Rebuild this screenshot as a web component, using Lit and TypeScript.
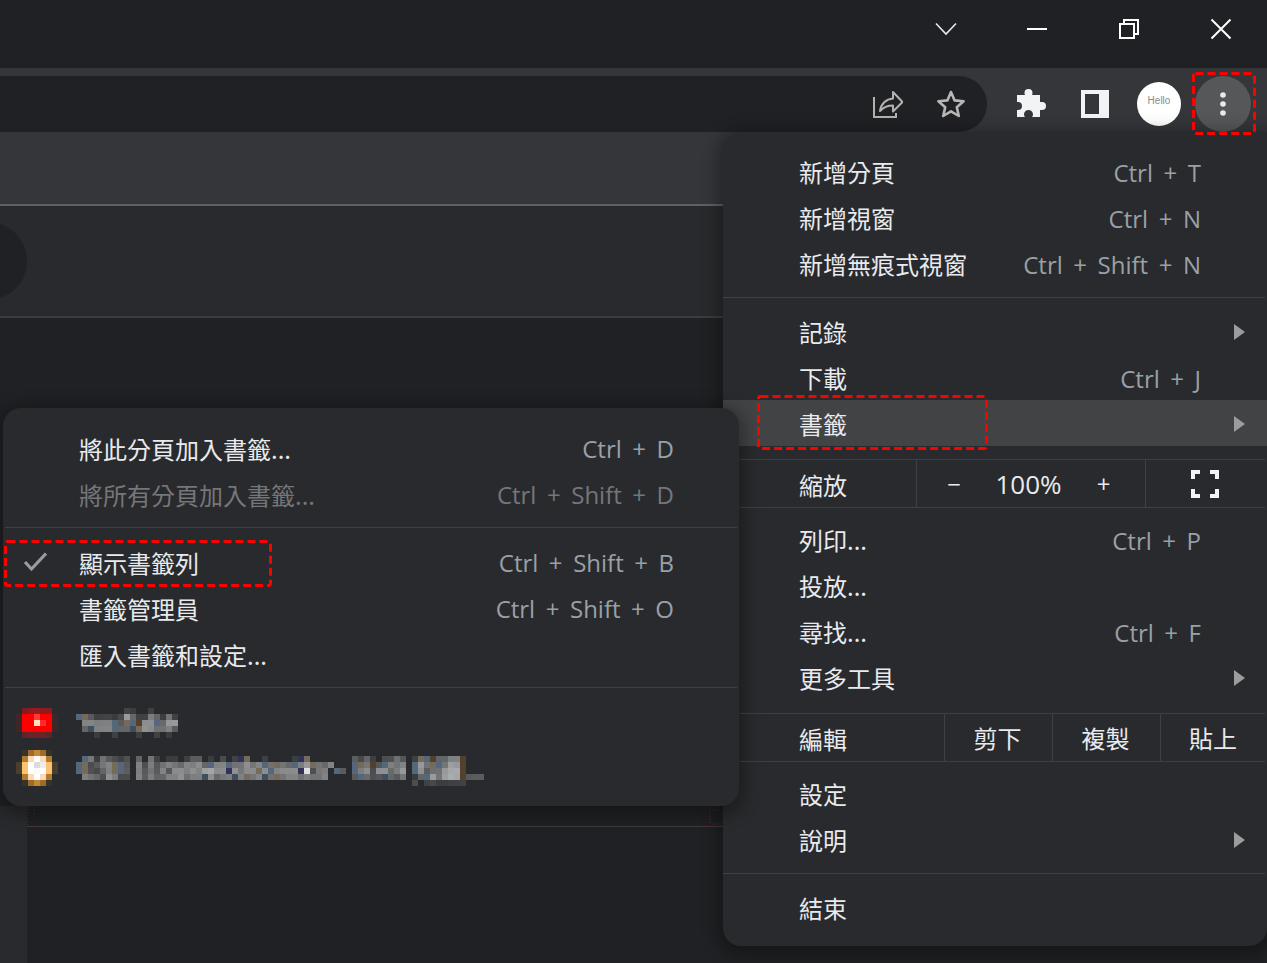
import { LitElement, html, css, svg } from "lit";
import { customElement } from "lit/decorators.js";

type Row = { t: string; k?: string; arrow?: boolean; hover?: boolean; dim?: boolean; check?: boolean };

const arrowIcon = html`<svg class="arrow" viewBox="0 0 11 16"><path d="M0 0 L11 8 L0 16 Z" fill="#9b9c9e"/></svg>`;

function hash(i: number) { return ((i * 2654435761) >>> 0) / 4294967296; }

const tints: Record<string, string> = {
  B: "#55677b", D: "#3f4f5f", N: "#30325a", T: "#756b5a", W: "#e0e0e8", R: "#54402f",
};

function tileColor(c: string, seed: number) {
  if (tints[c]) return tints[c];
  const j = Math.floor(hash(seed) * 8) - 4;
  const g = 50 + parseInt(c, 10) * 13 + j;
  return `rgb(${g},${g + 1},${g + 3})`;
}

function mosaic(rows: string[], cls: string) {
  const cells = [];
  let width = 0;
  for (let y = 0; y < rows.length; y++) {
    width = Math.max(width, rows[y].length * 6);
    for (let x = 0; x < rows[y].length; x++) {
      const c = rows[y][x];
      if (c === " ") continue;
      cells.push(svg`<rect x=${x * 6} y=${y * 6} width="6" height="6" fill=${tileColor(c, x * 31 + y * 17 + 1)}/>`);
    }
  }
  return html`<svg class="mosaic ${cls}" width=${width} height=${rows.length * 6} shape-rendering="crispEdges">${cells}</svg>`;
}

function favicon(rows: string[][], cls: string) {
  const cells = [];
  for (let y = 0; y < rows.length; y++) {
    for (let x = 0; x < rows[y].length; x++) {
      if (rows[y][x]) cells.push(svg`<rect x=${x * 6} y=${y * 6} width="6" height="6" fill=${rows[y][x]}/>`);
    }
  }
  return html`<svg class="favicon ${cls}" width="42" height=${rows.length * 6} shape-rendering="crispEdges">${cells}</svg>`;
}

function annotation(cls: string, w: number, h: number) {
  return html`<svg class="ann ${cls}" width=${w} height=${h}><rect x="1.5" y="1.5" width=${w - 3} height=${h - 3} rx="2" fill="none" stroke="#ff0000" stroke-width="3" stroke-dasharray="8 4"/></svg>`;
}

const yt = [
  "        11  1    ",
  "BT311112841164151",
  " 66666B3TBR77B488",
  " 4D666B44DT775563",
  "   1  1   1  1 1 ",
];
const cpu = [
  " B5153212 " + "4 51 11 13" + "3 1 2 1NT " + " 1    1NT " + "      3241" + " 2253 1TBR" + "4466R",
  "BT2356TB3 " + "6263565466" + "74B66B5575" + "6B5T54B68T" + "546   BT5R" + "3B656 B85T" + "B588R",
  "BT2246TB3 " + "6353637767" + "68977N7577" + "T7B6777NW2" + "56 B3 B672" + "77468 B735" + "5899R",
  " 65427622 " + "6364466756" + "6D7456D6T5" + "6D5T566565" + "56    3B42" + "3D435 14B8" + "5899R333",
  "                                                        2 1211111",
];

const ytIcon = [
  ["", "#7f1c20", "#8f1a1f", "#9b181c", "#8f1a1f", "#8f1a1f", ""],
  ["#3f2628", "#ff0000", "#ff0000", "#ff3a3a", "#ff0000", "#ff0000", "#3f2628"],
  ["#3f2628", "#ff0000", "#ff0000", "#ffe0c0", "#ff2a2a", "#ff0000", "#3f2628"],
  ["#3f2628", "#ff0000", "#ff0000", "#ff0000", "#ff0000", "#ff0000", "#3f2628"],
  ["", "#5d2528", "#6d2226", "#6d2226", "#6d2226", "#5d2528", ""],
];
const cpuIcon = [
  ["", "#36322c", "#a06a28", "#c08a30", "#a06a28", "#36322c", ""],
  ["", "#b07a30", "#ffd8b8", "#ffffff", "#ffd8b8", "#b07a30", ""],
  ["#4a3f2c", "#ffc070", "#ffffff", "#dcdcdc", "#e8eef2", "#ffc070", "#4a3f2c"],
  ["#4a3f2c", "#ffc070", "#ffffff", "#fafafa", "#ffffff", "#ffc070", "#4a3f2c"],
  ["", "#b07a30", "#ffd8b8", "#ffffff", "#ffd8b8", "#b07a30", ""],
  ["", "#36322c", "#a06a28", "#c08a30", "#a06a28", "#36322c", ""],
];

@customElement("app-root")
export class AppRoot extends LitElement {
  static styles = css`
    :host { display: block; width: 1267px; height: 963px; position: relative; overflow: hidden; background: #202124;
      font-family: "Noto Sans CJK TC", "Noto Sans", sans-serif; color: #e8eaed; }
    .titlebar { height: 68px; display: flex; justify-content: flex-end; align-items: flex-start; }
    .win { width: 92px; height: 58px; display: flex; align-items: center; justify-content: center; }
    .win svg { display: block; }
    .chev { margin-left: 2px; }
    .toolbar { height: 64px; background: #35363a; display: flex; align-items: flex-end; }
    .omni { width: 987px; height: 56px; background: #202124; border-radius: 0 28px 28px 0; display: flex; justify-content: flex-end; align-items: center; gap: 33px; padding-right: 21px; box-sizing: border-box; }
    .bookmarks { height: 72px; background: #35363a; border-bottom: 2px solid #5f6063; }
    .content { height: 110px; background: #292a2d; border-bottom: 2px solid #3c3d40; position: relative; overflow: hidden; }
    .blob { position: absolute; left: -51px; top: 16px; width: 78px; height: 78px; border-radius: 50%; background: #202124; }
    .page { position: absolute; left: 0; top: 806px; right: 0; bottom: 0; display: flex; }
    .page .side { width: 27px; background: #292a2d; }
    .page .main { flex: 1; margin-top: 20px; border-top: 1px solid #3c3d40; }
    .remnant { position: absolute; left: 0; top: 800px; }

    .menu { position: absolute; background: #292a2d; box-sizing: border-box; box-shadow: 0 4px 16px 6px rgba(0,0,0,.3); }
    .main-menu { left: 723px; top: 132px; width: 544px; height: 814px; border-radius: 18px 0 18px 18px; padding-top: 16px; }
    .sub-menu { left: 3px; top: 408px; width: 736px; height: 398px; border-radius: 18px; padding-top: 17px; }
    .row { height: 46px; display: flex; align-items: center; font-size: 24px; line-height: 46px; color: #e8eaed; position: relative; }
    .main-menu .row { padding-left: 76px; padding-right: 66px; }
    .sub-menu .row { padding-left: 76px; padding-right: 65px; }
    .row .label { flex: 1; white-space: nowrap; padding-top: 2px; }
    .row .key { font-family: "Open Sans", "Noto Sans", sans-serif; font-size: 24px; color: #9aa0a6; white-space: nowrap; word-spacing: 4.3px; padding-top: 4px; }
    .sub-menu .row .key { padding-top: 2px; }
    .row.hover { background: #424345; }
    .row.dim .label, .row.dim .key { color: #757679; }
    .arrow { position: absolute; right: 22px; top: 16px; width: 11px; height: 16px; }
    .sep { height: 1px; background: #3f4043; }
    .main-menu .sep { margin-right: 2px; }
    .sub-menu .sep { margin-left: 2px; margin-right: 2px; }
    .g8 { height: 8px; } .g10 { height: 10px; } .g11 { height: 11px; } .g12 { height: 12px; } .g13 { height: 13px; }
    .check { position: absolute; left: 20px; top: 13px; }

    .split { height: 47px; display: flex; align-items: stretch; font-size: 24px; padding-left: 76px; }
    .split .label { flex: 1; line-height: 50px; }
    .zoom-ctl { display: flex; align-items: center; width: 229px; border-left: 1px solid #3f4043; box-sizing: border-box; color: #e8eaed; font-family: "Open Sans", "Noto Sans", sans-serif; }
    .zoom-ctl span { text-align: center; }
    .z-btn { width: 75px; }
    .z-btn:first-child { width: 74px; }
    .z-val { width: 75px; font-size: 26px; }
    .full { width: 120px; border-left: 1px solid #3f4043; display: flex; align-items: center; justify-content: center; box-sizing: border-box; margin-right: 2px; padding-right: 2px; }
    .edit { width: 108px; border-left: 1px solid #3f4043; text-align: center; box-sizing: border-box; line-height: 47px; padding-right: 2px; }
    .edit.last { width: 107px; }

    .fav-row { height: 46px; position: relative; }
    .mosaic { position: absolute; left: 73px; display: block; }
    .favicon { position: absolute; left: 13px; display: block; }
    .t8 { top: 8px; }
    .t4 { top: 4px; }
    .t10 { top: 10px; }

    .ann { position: absolute; display: block; pointer-events: none; }
    .a1 { left: 1192px; top: 72px; }
    .a2 { left: 757px; top: 395px; }
    .a3 { left: 4px; top: 540px; }

    .kebab { width: 56px; height: 56px; border-radius: 50%; background: #565759; display: flex; align-items: center; justify-content: center; position: absolute; left: 1195px; top: 76px; }
    .avatar { position: absolute; left: 1137px; top: 82px; width: 44px; height: 44px; border-radius: 50%; background: #fff; color: #8a8a8a; font: 10px "Liberation Sans", sans-serif; text-align: center; line-height: 37px; }
    .ic { position: absolute; display: block; }
    .puzzle { left: 1017px; top: 89px; }
    .panel { left: 1081px; top: 90px; }
  `;

  renderRow(r: Row) {
    return html`<div class="row ${r.hover ? "hover" : ""} ${r.dim ? "dim" : ""}">
      ${r.check ? html`<svg class="check" width="25" height="22" viewBox="0 0 25 22"><path d="M2 10 L8.5 17 L23 1.5" fill="none" stroke="#9a9b9d" stroke-width="3.2"/></svg>` : ""}
      <span class="label">${r.t}</span>
      ${r.k ? html`<span class="key">${r.k}</span>` : ""}
      ${r.arrow ? arrowIcon : ""}
    </div>`;
  }

  render() {
    return html`
      <div class="titlebar">
        <div class="win"><svg class="chev" width="22" height="14" viewBox="0 0 22 14"><path d="M1 1.5 L11 12 L21 1.5" fill="none" stroke="#e8eaed" stroke-width="1.6"/></svg></div>
        <div class="win"><svg width="20" height="2" viewBox="0 0 20 2"><rect width="20" height="2" fill="#fff"/></svg></div>
        <div class="win"><svg width="20" height="20" viewBox="0 0 20 20"><path d="M5 4 V1 H19 V15 H16" fill="none" stroke="#fff" stroke-width="2"/><rect x="1" y="5" width="14" height="14" fill="none" stroke="#fff" stroke-width="2"/></svg></div>
        <div class="win"><svg width="22" height="22" viewBox="0 0 22 22"><path d="M1.5 1.5 L20.5 20.5 M20.5 1.5 L1.5 20.5" stroke="#fff" stroke-width="2"/></svg></div>
      </div>
      <div class="toolbar">
        <div class="omni">
          <svg width="30" height="28" viewBox="0 0 30 28"><path d="M1 7 V27 H23 V23" fill="none" stroke="#b4b2b0" stroke-width="2"/><path d="M7 21 C8 14 13 9 20 8.5 V2 L29.5 12 L20 21.5 V15.5 C14.5 15.5 10.5 17 7 21 Z" fill="none" stroke="#b4b2b0" stroke-width="2" stroke-linejoin="round"/></svg>
          <svg width="30" height="30" viewBox="0 0 30 30"><path d="M15 3 L18.6 11.4 L27.6 12.2 L20.8 18.2 L22.8 27 L15 22.4 L7.2 27 L9.2 18.2 L2.4 12.2 L11.4 11.4 Z" fill="none" stroke="#b9b7b5" stroke-width="2.6" stroke-linejoin="round"/></svg>
        </div>
      </div>
      <svg class="ic puzzle" width="30" height="28" viewBox="0 0 30 28"><path d="M0 6 H8 C8 6 7.5 5 7.5 4 A4 4 0 0 1 15.5 4 C15.5 5 15 6 15 6 H23 V13 H25 A4 4 0 0 1 25 21 H23 V28 H15 C15 28 16 27 16 25.5 A4.5 4.5 0 0 0 7 25.5 C7 27 8 28 8 28 H0 V21 H1 A4 4 0 0 0 1 13 H0 Z" fill="#f1f3f4"/></svg>
      <svg class="ic panel" width="28" height="28" viewBox="0 0 28 28"><path d="M0 0 H28 V28 H0 Z M4 4 V24 H18 V4 Z" fill="#f1f3f4" fill-rule="evenodd"/></svg>
      <div class="avatar">Hello</div>
      <div class="kebab"><svg width="6" height="24" viewBox="0 0 6 24"><circle cx="3" cy="3" r="2.8" fill="#e8eaed"/><circle cx="3" cy="12" r="2.8" fill="#e8eaed"/><circle cx="3" cy="21" r="2.8" fill="#e8eaed"/></svg></div>

      <div class="bookmarks"></div>
      <div class="content"><div class="blob"></div></div>
      <div class="page"><div class="side"></div><div class="main"></div></div>
      <svg class="remnant" width="740" height="40"><path d="M28 6 V26 M30 8 H34 V14 M712 10 H722 V24 H712 M710 10 V24" fill="none" stroke="#5a2c30" stroke-width="1" stroke-dasharray="1 2"/><path d="M32 26.5 H40 M702 26.5 H712" stroke="#4f3236" stroke-width="1"/></svg>

      <div class="menu main-menu">
        ${this.renderRow({ t: "新增分頁", k: "Ctrl + T" })}
        ${this.renderRow({ t: "新增視窗", k: "Ctrl + N" })}
        ${this.renderRow({ t: "新增無痕式視窗", k: "Ctrl + Shift + N" })}
        <div class="g11"></div><div class="sep"></div><div class="g10"></div>
        ${this.renderRow({ t: "記錄", arrow: true })}
        ${this.renderRow({ t: "下載", k: "Ctrl + J" })}
        ${this.renderRow({ t: "書籤", arrow: true, hover: true })}
        <div class="g13"></div><div class="sep"></div>
        <div class="split">
          <span class="label">縮放</span>
          <div class="zoom-ctl"><span class="z-btn">−</span><span class="z-val">100%</span><span class="z-btn">+</span></div>
          <div class="full"><svg width="28" height="28" viewBox="0 0 28 28"><path d="M0 9 V0 H9 V4 H4 V9 Z M19 0 H28 V9 H24 V4 H19 Z M0 19 H4 V24 H9 V28 H0 Z M24 19 H28 V28 H19 V24 H24 Z" fill="#f1f3f4"/></svg></div>
        </div>
        <div class="sep"></div><div class="g8"></div>
        ${this.renderRow({ t: "列印...", k: "Ctrl + P" })}
        ${this.renderRow({ t: "投放..." })}
        ${this.renderRow({ t: "尋找...", k: "Ctrl + F" })}
        ${this.renderRow({ t: "更多工具", arrow: true })}
        <div class="g13"></div><div class="sep"></div>
        <div class="split">
          <span class="label">編輯</span>
          <div class="edit">剪下</div><div class="edit">複製</div><div class="edit last">貼上</div>
        </div>
        <div class="sep"></div><div class="g8"></div>
        ${this.renderRow({ t: "設定" })}
        ${this.renderRow({ t: "說明", arrow: true })}
        <div class="g11"></div><div class="sep"></div><div class="g10"></div>
        ${this.renderRow({ t: "結束" })}
      </div>

      <div class="menu sub-menu">
        ${this.renderRow({ t: "將此分頁加入書籤...", k: "Ctrl + D" })}
        ${this.renderRow({ t: "將所有分頁加入書籤...", k: "Ctrl + Shift + D", dim: true })}
        <div class="g10"></div><div class="sep"></div><div class="g11"></div>
        ${this.renderRow({ t: "顯示書籤列", k: "Ctrl + Shift + B", check: true })}
        ${this.renderRow({ t: "書籤管理員", k: "Ctrl + Shift + O" })}
        ${this.renderRow({ t: "匯入書籤和設定..." })}
        <div class="g10"></div><div class="sep"></div><div class="g12"></div>
        <div class="fav-row">
          ${favicon(ytIcon, "t8")}
          ${mosaic(yt, "t8")}
        </div>
        <div class="fav-row">
          ${favicon(cpuIcon, "t4")}
          ${mosaic(cpu, "t10")}
        </div>
      </div>

      ${annotation("a1", 64, 63)}
      ${annotation("a2", 231, 55)}
      ${annotation("a3", 268, 47)}
    `;
  }
}
